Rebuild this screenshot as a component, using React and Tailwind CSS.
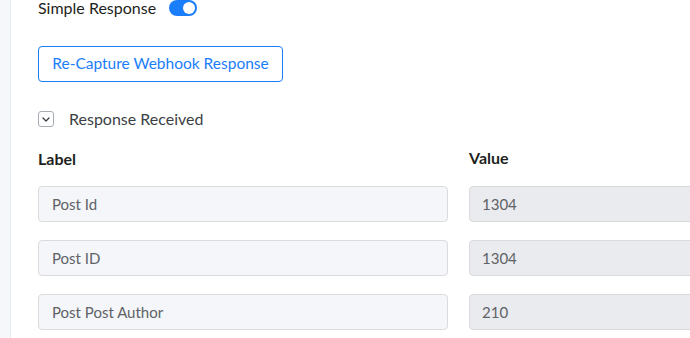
import React, { useState } from "react";

const rows = [
  { label: "Post Id", value: "1304" },
  { label: "Post ID", value: "1304" },
  { label: "Post Post Author", value: "210" },
];

const App = () => {
  const [simple, setSimple] = useState(true);
  const [open, setOpen] = useState(true);

  return (
    <div className="flex h-[338px] w-[690px] overflow-hidden bg-white font-['Lato',sans-serif] text-[16px] text-[#1e1f21]">
      <div className="w-[11px] shrink-0 border-r border-[#e9edf1] bg-[#f5f7fa]" />
      <div className="flex-1 pl-[27px]">
        <div className="flex h-[16px] items-center gap-[13px]">
          <span className="leading-[16px] text-[#1e1f21]">Simple Response</span>
          <button
            onClick={() => setSimple(!simple)}
            className={`relative h-[16px] w-[28px] rounded-full ${simple ? "bg-[#1a7efb]" : "bg-gray-300"}`}
          >
            <span
              className={`absolute top-[2px] h-[12px] w-[12px] rounded-full bg-white ${simple ? "left-[14px]" : "left-[2px]"}`}
            />
          </button>
        </div>

        <button className="mt-[30px] h-[36px] w-[245px] rounded-[4px] border border-[#1a7efb] text-[15.5px] text-[#1a7efb]">
          Re-Capture Webhook Response
        </button>

        <div className="mt-[29px] flex h-[16px] items-center gap-[15px]">
          <button
            onClick={() => setOpen(!open)}
            className="flex h-[16px] w-[16px] items-center justify-center rounded-[3px] border border-[#a8adb3]"
          >
            <svg width="8" height="5" viewBox="0 0 8 5" fill="none">
              <path d="M1 1l3 3 3-3" stroke="#3b3f44" strokeWidth="1.3" strokeLinecap="round" strokeLinejoin="round" />
            </svg>
          </button>
          <span className="text-[#3b3f44]">Response Received</span>
        </div>

        {open && (
          <div className="mt-[20px] grid grid-cols-[410px_1fr] gap-x-[21px]">
            <div className="h-[39px] pt-[1px] leading-[22px] font-bold text-[#1e1f21]">Label</div>
            <div className="h-[39px] leading-[22px] font-bold text-[#1e1f21]">Value</div>
            {rows.map((r, i) => (
              <React.Fragment key={i}>
                <div className="mb-[18px] flex h-[36px] items-center rounded-[4px] border border-[#dadbdd] bg-[#f4f6f9] px-[13px] text-[15px] text-[#606266]">
                  {r.label}
                </div>
                <div className="mb-[18px] -mr-[10px] flex h-[36px] items-center rounded-[4px] border border-[#dadbdd] bg-[#e9ebee] px-[12px] text-[15px] text-[#606266]">
                  {r.value}
                </div>
              </React.Fragment>
            ))}
          </div>
        )}
      </div>
    </div>
  );
};

export default App;
